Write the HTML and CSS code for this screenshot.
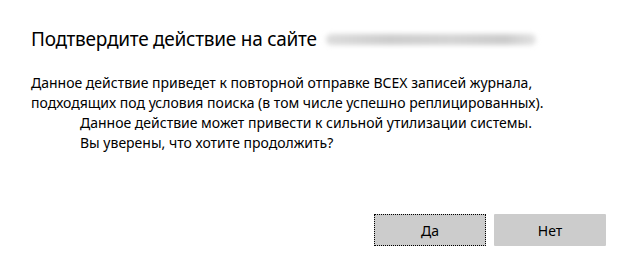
FILE: index.html
```html
<!DOCTYPE html>
<html lang="ru">
<head>
<meta charset="utf-8">
<link rel="stylesheet" href="styles.css">
</head>
<body>
<div class="dialog">
  <div class="title-row">
    <h1 class="title">Подтвердите действие на сайте</h1>
    <span class="redacted" aria-hidden="true"></span>
  </div>
  <div class="content">
    <p class="line">Данное действие приведет к повторной отправке ВСЕХ записей журнала,</p>
    <p class="line">подходящих под условия поиска (в том числе успешно реплицированных).</p>
    <p class="line indent">Данное действие может привести к сильной утилизации системы.</p>
    <p class="line indent">Вы уверены, что хотите продолжить?</p>
  </div>
  <div class="buttons">
    <button class="btn focused">Да</button>
    <button class="btn">Нет</button>
  </div>
</div>
</body>
</html>
```
FILE: styles.css
```css
html, body {
  margin: 0;
  padding: 0;
  background: #ffffff;
}
body {
  width: 636px;
  height: 277px;
  overflow: hidden;
  font-family: "Noto Sans", "Open Sans", sans-serif;
  color: #000000;
}
.dialog {
  display: flex;
  flex-direction: column;
  height: 277px;
  box-sizing: border-box;
  padding: 24px 30px 0 31px;
}
.title-row {
  display: flex;
  align-items: center;
  height: 30px;
}
.title {
  margin: 0;
  font-size: 19px;
  font-weight: 400;
  letter-spacing: -0.25px;
  line-height: 30px;
  color: #000;
}
.redacted {
  display: block;
  width: 210px;
  height: 11px;
  margin-left: 9px;
  margin-top: 1px;
  background: linear-gradient(90deg, #dcdcdc 0%, #cdcdcd 30%, #d4d4d4 60%, #cbcbcb 85%, #e2e2e2 100%);
  border-radius: 6px;
  filter: blur(2.5px);
}
.content {
  margin-top: 19px;
  font-size: 14px;
  line-height: 20px;
}
.line {
  margin: 0;
  white-space: nowrap;
}
.indent {
  padding-left: 49px;
}
.buttons {
  display: flex;
  justify-content: flex-end;
  gap: 8px;
  margin-top: 61px;
}
.btn {
  width: 112px;
  height: 32px;
  border: 1px solid transparent;
  background: #cccccc;
  font-family: inherit;
  font-size: 14px;
  color: #000;
  padding: 0;
  border-radius: 1px;
}
.btn.focused {
  border: 1px dotted #000000;
  border-radius: 0;
}
```
